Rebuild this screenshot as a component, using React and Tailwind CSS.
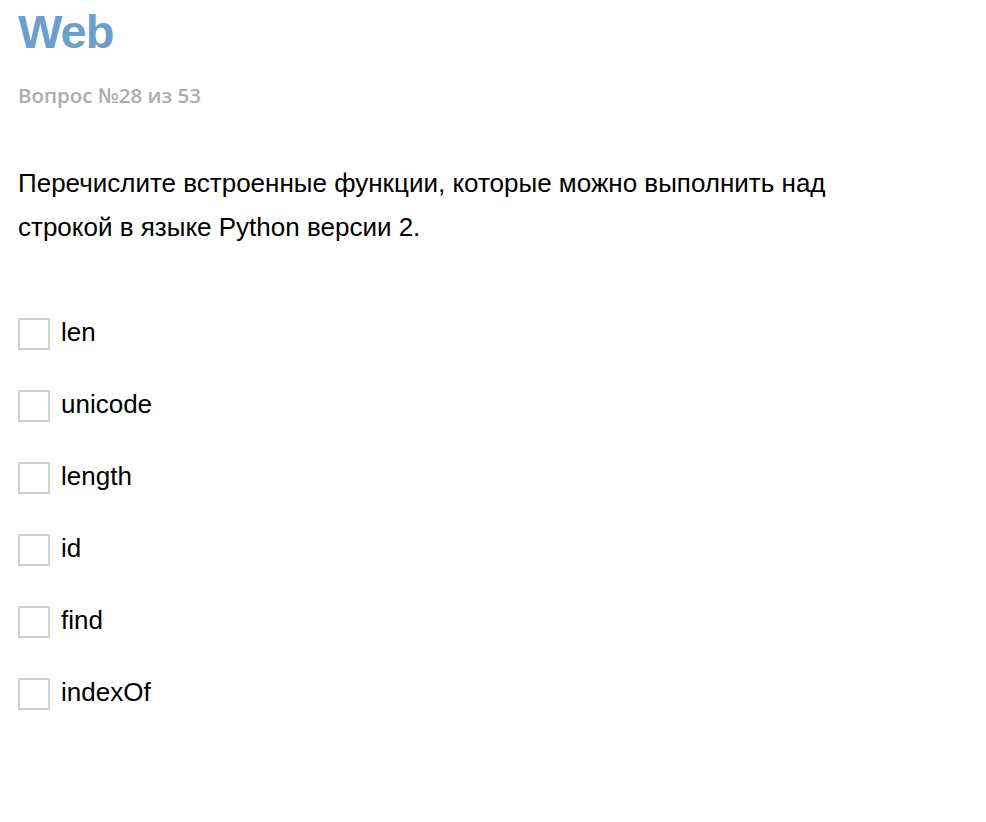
import { useState } from 'react';

const options = ['len', 'unicode', 'length', 'id', 'find', 'indexOf'];

export default function App() {
  const [checked, setChecked] = useState({});

  return (
    <div className="min-h-screen bg-white px-[18px] pt-[4px] text-black" style={{ fontFamily: '"Liberation Sans", Arial, sans-serif' }}>
      <h1 className="text-[47px] font-bold leading-[56px] tracking-[-1px] text-[#6b9fcc]">Web</h1>
      <p className="mt-[23px] text-[20.5px] font-semibold leading-[24px] text-[#acacac]" style={{ fontFamily: '"Open Sans", sans-serif' }}>
        Вопрос №28 из 53
      </p>
      <p className="mt-[54px] max-w-[830px] text-[26px] leading-[44px]">
        Перечислите встроенные функции, которые можно выполнить над строкой в языке Python версии 2.
      </p>
      <ul className="mt-[69px] flex flex-col gap-[40px]">
        {options.map((option) => (
          <li key={option}>
            <label className="flex cursor-pointer items-center gap-[11px] text-[26px] leading-[32px]">
              <input
                type="checkbox"
                className="peer sr-only"
                checked={!!checked[option]}
                onChange={() => setChecked({ ...checked, [option]: !checked[option] })}
              />
              <span className="block h-[32px] w-[32px] shrink-0 border-2 border-[#d0d0d0] bg-white peer-checked:bg-[#6b9fcc]" />
              <span className="-mt-[5px]">{option}</span>
            </label>
          </li>
        ))}
      </ul>
    </div>
  );
}
